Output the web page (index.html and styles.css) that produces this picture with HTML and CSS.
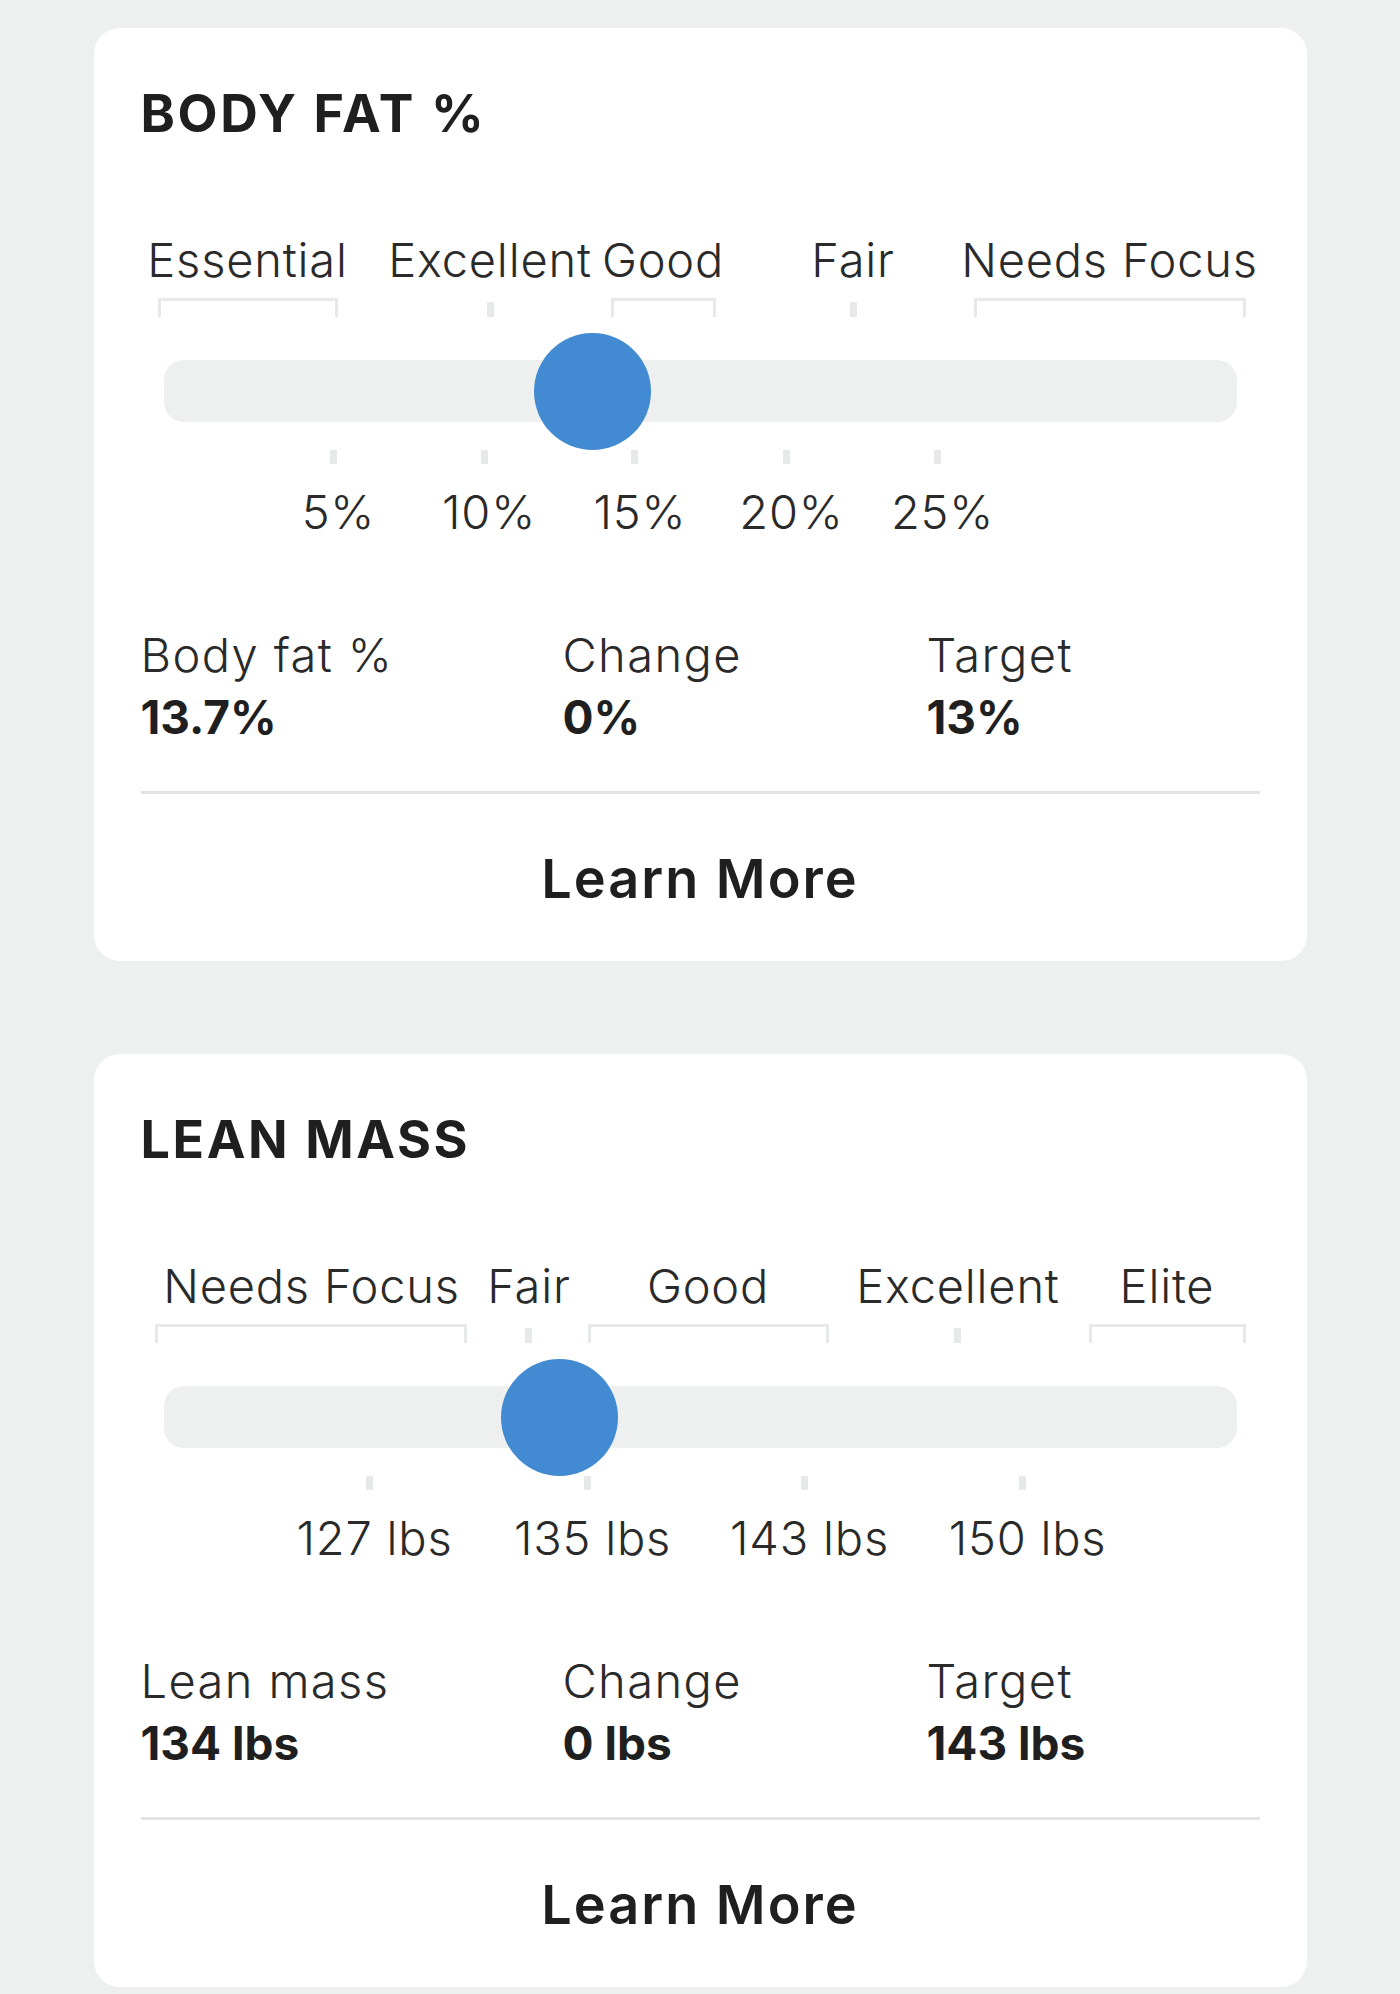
FILE: index.html
```html
<!DOCTYPE html>
<html lang="en">
<head>
    <meta charset="UTF-8">
    <meta name="viewport" content="width=device-width, initial-scale=1.0">
    <title>Body Composition</title>
    <link rel="stylesheet" href="styles.css">
</head>
<body>
    <main class="page">

        <section class="card">
            <h2 class="card-title">BODY FAT %</h2>
            <div class="scale">
                <div class="zones">
                    <div class="zone" style="left:-0.56%;width:16.78%"><span class="zone-label">Essential</span><i class="bracket"></i></div>
                    <div class="zone point" style="left:30.43%"><span class="zone-label">Excellent</span><i class="tick"></i></div>
                    <div class="zone" style="left:41.66%;width:9.79%"><span class="zone-label">Good</span><i class="bracket"></i></div>
                    <div class="zone point" style="left:64.26%"><span class="zone-label">Fair</span><i class="tick"></i></div>
                    <div class="zone" style="left:75.49%;width:25.35%"><span class="zone-label">Needs Focus</span><i class="bracket"></i></div>
                </div>
                <div class="track"><span class="thumb" style="left:40%"></span></div>
                <div class="marks">
                    <div class="mark" style="left:15.84%"><i class="tick"></i><span>5%</span></div>
                    <div class="mark" style="left:29.87%"><i class="tick"></i><span>10%</span></div>
                    <div class="mark" style="left:43.94%"><i class="tick"></i><span>15%</span></div>
                    <div class="mark" style="left:58.06%"><i class="tick"></i><span>20%</span></div>
                    <div class="mark" style="left:72.13%"><i class="tick"></i><span>25%</span></div>
                </div>
            </div>
            <div class="stats">
                <div class="stat"><span class="stat-label">Body fat %</span><strong class="stat-value">13.7%</strong></div>
                <div class="stat"><span class="stat-label">Change</span><strong class="stat-value">0%</strong></div>
                <div class="stat"><span class="stat-label">Target</span><strong class="stat-value">13%</strong></div>
            </div>
            <a class="learn-more" href="#">Learn More</a>
        </section>

        <section class="card">
            <h2 class="card-title">LEAN MASS</h2>
            <div class="scale">
                <div class="zones">
                    <div class="zone" style="left:-0.75%;width:29.08%"><span class="zone-label">Needs Focus</span><i class="bracket"></i></div>
                    <div class="zone point" style="left:34.06%"><span class="zone-label">Fair</span><i class="tick"></i></div>
                    <div class="zone" style="left:39.52%;width:22.46%"><span class="zone-label">Good</span><i class="bracket"></i></div>
                    <div class="zone point" style="left:74.04%"><span class="zone-label">Excellent</span><i class="tick"></i></div>
                    <div class="zone" style="left:86.21%;width:14.63%"><span class="zone-label">Elite</span><i class="bracket"></i></div>
                </div>
                <div class="track"><span class="thumb" style="left:36.95%"></span></div>
                <div class="marks">
                    <div class="mark" style="left:19.2%"><i class="tick"></i><span>127 lbs</span></div>
                    <div class="mark" style="left:39.52%"><i class="tick"></i><span>135 lbs</span></div>
                    <div class="mark" style="left:59.74%"><i class="tick"></i><span>143 lbs</span></div>
                    <div class="mark" style="left:80.06%"><i class="tick"></i><span>150 lbs</span></div>
                </div>
            </div>
            <div class="stats">
                <div class="stat"><span class="stat-label">Lean mass</span><strong class="stat-value">134 lbs</strong></div>
                <div class="stat"><span class="stat-label">Change</span><strong class="stat-value">0 lbs</strong></div>
                <div class="stat"><span class="stat-label">Target</span><strong class="stat-value">143 lbs</strong></div>
            </div>
            <a class="learn-more" href="#">Learn More</a>
        </section>

    </main>
</body>
</html>
```

FILE: styles.css
```css
body {
    margin: 0;
    background: #eef0ef;
    font-family: Inter, "Noto Sans", sans-serif;
    color: #222;
}

.page {
    width: 1213px;
    margin: 0 auto;
    padding-top: 28px;
    display: flex;
    flex-direction: column;
    gap: 93px;
}

.card {
    background: #fff;
    border-radius: 26px;
    padding: 60px 47px 55px;
}

.card-title {
    margin: 0 0 97px;
    font-size: 52px;
    line-height: 51px;
    font-weight: 700;
    letter-spacing: 2.6px;
    color: #1f1f1f;
}

/* range scale: zone labels on top, bar + thumb, value marks below */
.scale {
    margin: 0 23px;
}

.zones {
    position: relative;
    height: 81px;
}

.zone {
    position: absolute;
    top: 0;
    height: 81px;
    display: flex;
    flex-direction: column;
    align-items: center;
    justify-content: space-between;
}

.zone.point {
    width: 0;
}

.zone-label,
.mark span,
.stat-label {
    font-size: 47px;
    line-height: 47px;
    font-weight: 300;
    letter-spacing: 0.8px;
    color: #2a2a2a;
    white-space: nowrap;
}

.bracket {
    box-sizing: border-box;
    width: 100%;
    height: 19px;
    border: 3px solid #e7e9e9;
    border-bottom: none;
}

.tick {
    display: block;
    flex: none;
    width: 7px;
    height: 15px;
    background: #e7e9e9;
}

.track {
    position: relative;
    height: 62px;
    margin-top: 43px;
    border-radius: 20px;
    background: #eef0ef;
}

.thumb {
    position: absolute;
    top: 50%;
    width: 117px;
    height: 117px;
    margin: -58.5px 0 0 -58.5px;
    border-radius: 50%;
    background: #428ad1;
}

.marks {
    position: relative;
    height: 85px;
    margin-top: 28px;
}

.mark {
    position: absolute;
    top: 0;
    width: 0;
    display: flex;
    flex-direction: column;
    align-items: center;
}

.mark .tick {
    height: 14px;
}

.mark span {
    margin: 24px 0 0 10px;
}

.stats {
    display: grid;
    grid-template-columns: 422px 364px auto;
    margin-top: 96px;
    padding-bottom: 51px;
    border-bottom: 3px solid #e2e3e3;
}

.stat {
    display: flex;
    flex-direction: column;
    gap: 16px;
}

.stat-label {
    letter-spacing: 1.4px;
}

.stat-value {
    font-size: 46px;
    line-height: 46px;
    font-weight: 700;
    color: #1f1f1f;
}

.learn-more {
    display: block;
    margin-top: 58px;
    text-align: center;
    font-size: 54px;
    line-height: 54px;
    font-weight: 600;
    letter-spacing: 2px;
    color: #1f1f1f;
    text-decoration: none;
}
```
